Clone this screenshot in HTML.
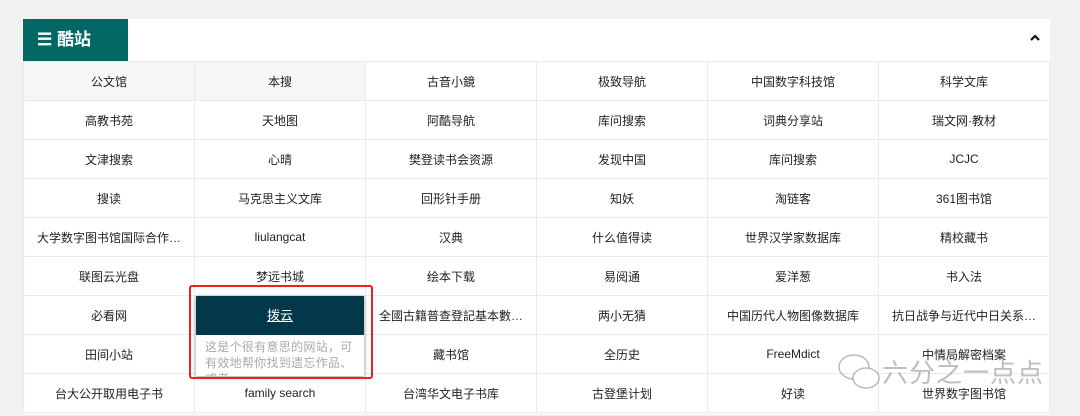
<!DOCTYPE html>
<html><head><meta charset="utf-8"><style>
body{margin:0;width:1080px;height:416px;background:#f2f1f0;font-family:"Liberation Sans","Noto Sans CJK SC",sans-serif;position:relative;overflow:hidden}
.card{position:absolute;left:23px;top:19px;width:1027px;height:395px;background:#fff}
.tab{position:absolute;left:0;top:0;width:105px;height:42px;background:#036864;color:#fff;font-weight:bold;font-size:17px;line-height:42px;padding-left:14px;box-sizing:border-box}
.chev{position:absolute;left:1006px;top:14px}
table{position:absolute;left:0;top:42px;border-collapse:collapse;table-layout:fixed}
td{width:170px;height:38px;border:1px solid #ebebeb;text-align:center;font-size:12px;color:#222;padding:0;white-space:nowrap;overflow:hidden}
.tip{position:absolute;left:196px;top:296px;width:168px;height:80px;box-shadow:0 1px 4px rgba(0,0,0,.4);background:#fff}
.tip .h{height:39px;background:#03384a;color:#fff;text-align:center;line-height:39px;font-size:13px;text-decoration:underline}
.tip .b{font-size:12px;color:#aaa;padding:4px 6px 0 9px;line-height:16px;height:37px;overflow:hidden;letter-spacing:.3px}
.red{position:absolute;left:189px;top:285px;width:180px;height:90px;border:2px solid #f02020;border-radius:3px}
.wm{position:absolute;left:882px;top:353px;font-size:26px;color:rgba(110,110,110,.45);letter-spacing:1px}
</style></head><body>
<div class="card">
<div class="tab">☰ 酷站</div>
<svg class="chev" width="12" height="10"><path d="M2 7 L6 3 L10 7" stroke="#111" stroke-width="2.2" fill="none"/></svg>
<table>
<tr><td style="background:#f6f6f6">公文馆</td><td style="background:#f6f6f6">本搜</td><td>古音小鏡</td><td>极致导航</td><td>中国数字科技馆</td><td>科学文库</td></tr>
<tr><td>高教书苑</td><td>天地图</td><td>阿酷导航</td><td>库问搜索</td><td>词典分享站</td><td>瑞文网·教材</td></tr>
<tr><td>文津搜索</td><td>心晴</td><td>樊登读书会资源</td><td>发现中国</td><td>库问搜索</td><td>JCJC</td></tr>
<tr><td>搜读</td><td>马克思主义文库</td><td>回形针手册</td><td>知妖</td><td>淘链客</td><td>361图书馆</td></tr>
<tr><td>大学数字图书馆国际合作…</td><td>liulangcat</td><td>汉典</td><td>什么值得读</td><td>世界汉学家数据库</td><td>精校藏书</td></tr>
<tr><td>联图云光盘</td><td>梦远书城</td><td>绘本下载</td><td>易阅通</td><td>爱洋葱</td><td>书入法</td></tr>
<tr><td>必看网</td><td></td><td>全國古籍普查登記基本數…</td><td>两小无猜</td><td>中国历代人物图像数据库</td><td>抗日战争与近代中日关系…</td></tr>
<tr><td>田间小站</td><td></td><td>藏书馆</td><td>全历史</td><td>FreeMdict</td><td>中情局解密档案</td></tr>
<tr><td>台大公开取用电子书</td><td>family search</td><td>台湾华文电子书库</td><td>古登堡计划</td><td>好读</td><td>世界数字图书馆</td></tr>
</table>
</div>
<div class="tip"><div class="h">拨云</div><div class="b">这是个很有意思的网站，可有效地帮你找到遗忘作品、或者</div></div>
<div class="red"></div>
<svg style="position:absolute;left:836px;top:352px" width="50" height="42"><ellipse cx="18" cy="15" rx="15" ry="12" fill="none" stroke="rgba(120,120,120,.5)" stroke-width="1.5"/><ellipse cx="30" cy="26" rx="13" ry="10" fill="#fff" stroke="rgba(120,120,120,.5)" stroke-width="1.5"/></svg>
<div class="wm">六分之一点点</div>
</body></html>
